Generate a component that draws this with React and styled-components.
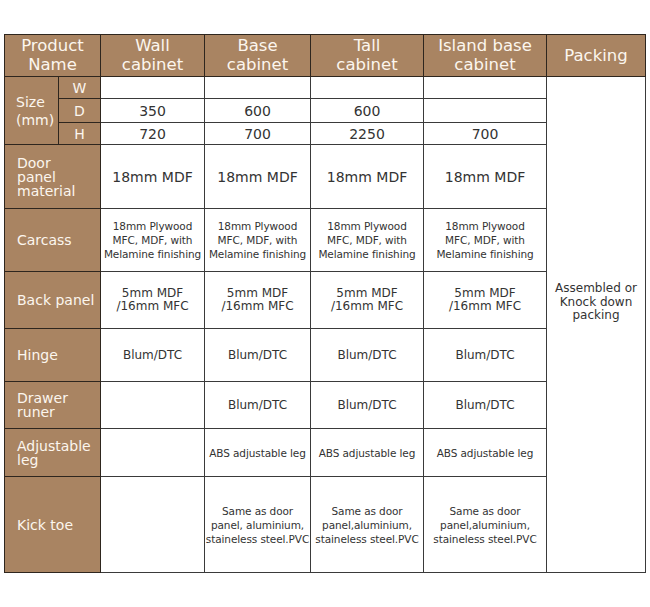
import React from "react";
import styled, { createGlobalStyle } from "styled-components";

const Global = createGlobalStyle`
  html, body { margin: 0; padding: 0; background: #fff; }
  body { font-family: "DejaVu Sans", Verdana, sans-serif; }
`;

const Page = styled.div`
  padding: 34px 5px 30px 4px;
`;

const Table = styled.table`
  border-collapse: collapse;
  table-layout: fixed;
  width: 641px;
  font-family: "DejaVu Sans", Verdana, sans-serif;
  color: #333;
  border: 1px solid #3a3a3a;
`;

const Row = styled.tr`
  height: ${(p) => p.h}px;
`;

const Head = styled.th`
  background: #a98462;
  color: #fcf6ee;
  font-weight: normal;
  font-size: 16.5px;
  line-height: 19px;
  text-align: center;
  vertical-align: middle;
  padding: 0 2px 1px;
  border: 1px solid #2e261e;
`;

const Label = styled.td`
  background: #a98462;
  color: #fcf6ee;
  font-size: 14px;
  line-height: ${(p) => p.lh || 14}px;
  text-align: ${(p) => (p.center ? "center" : "left")};
  vertical-align: middle;
  padding: 0 0 0 ${(p) => (p.center ? 0 : p.pl || 12)}px;
  border: 1px solid #2e261e;
`;

const Cell = styled.td`
  background: #fff;
  font-size: ${(p) => p.fs || 14}px;
  line-height: ${(p) => p.lh || 14}px;
  letter-spacing: ${(p) => (p.tight ? "-0.1px" : "0")};
  text-align: center;
  vertical-align: middle;
  padding: 0;
  white-space: nowrap;
  border: 1px solid #3a3a3a;
  border-left-color: ${(p) => (p.soft ? "#8c8c8c" : "#3a3a3a")};
`;

const Packing = styled(Cell)`
  padding-bottom: 44px;
  font-size: 12px;
  line-height: 13.4px;
`;

const widths = [54, 42, 104, 106, 113, 123, 99];

const Small = ({ lines, ...rest }) => (
  <Cell fs={10.5} lh={14} tight {...rest}>
    {lines.map((l, i) => (
      <React.Fragment key={i}>
        {i > 0 && <br />}
        {l}
      </React.Fragment>
    ))}
  </Cell>
);

export default function App() {
  return (
    <Page>
      <Global />
      <Table>
        <colgroup>
          {widths.map((w, i) => (
            <col key={i} style={{ width: w }} />
          ))}
        </colgroup>
        <tbody>
          <Row h={42}>
            <Head colSpan={2}>Product<br />Name</Head>
            <Head>Wall<br />cabinet</Head>
            <Head>Base<br />cabinet</Head>
            <Head>Tall<br />cabinet</Head>
            <Head>Island base<br />cabinet</Head>
            <Head>Packing</Head>
          </Row>
          <Row h={22}>
            <Label rowSpan={3} lh={18} pl={11}>Size<br />(mm)</Label>
            <Label center>W</Label>
            <Cell />
            <Cell soft />
            <Cell />
            <Cell />
            <Packing rowSpan={10}>Assembled or<br />Knock down<br />packing</Packing>
          </Row>
          <Row h={24}>
            <Label center>D</Label>
            <Cell>350</Cell>
            <Cell soft>600</Cell>
            <Cell>600</Cell>
            <Cell />
          </Row>
          <Row h={22}>
            <Label center>H</Label>
            <Cell>720</Cell>
            <Cell soft>700</Cell>
            <Cell>2250</Cell>
            <Cell>700</Cell>
          </Row>
          <Row h={64}>
            <Label colSpan={2}>Door<br />panel<br />material</Label>
            <Cell>18mm MDF</Cell>
            <Cell soft>18mm MDF</Cell>
            <Cell>18mm MDF</Cell>
            <Cell>18mm MDF</Cell>
          </Row>
          <Row h={63}>
            <Label colSpan={2}>Carcass</Label>
            <Small lines={["18mm Plywood", "MFC, MDF, with", "Melamine finishing"]} />
            <Small soft lines={["18mm Plywood", "MFC, MDF, with", "Melamine finishing"]} />
            <Small lines={["18mm Plywood", "MFC, MDF, with", "Melamine finishing"]} />
            <Small lines={["18mm Plywood", "MFC, MDF, with", "Melamine finishing"]} />
          </Row>
          <Row h={57}>
            <Label colSpan={2}>Back panel</Label>
            <Cell fs={12} lh={13.4}>5mm MDF<br />/16mm MFC</Cell>
            <Cell soft fs={12} lh={13.4}>5mm MDF<br />/16mm MFC</Cell>
            <Cell fs={12} lh={13.4}>5mm MDF<br />/16mm MFC</Cell>
            <Cell fs={12} lh={13.4}>5mm MDF<br />/16mm MFC</Cell>
          </Row>
          <Row h={53}>
            <Label colSpan={2}>Hinge</Label>
            <Cell fs={12}>Blum/DTC</Cell>
            <Cell soft fs={12}>Blum/DTC</Cell>
            <Cell fs={12}>Blum/DTC</Cell>
            <Cell fs={12}>Blum/DTC</Cell>
          </Row>
          <Row h={47}>
            <Label colSpan={2}>Drawer<br />runer</Label>
            <Cell />
            <Cell soft fs={12}>Blum/DTC</Cell>
            <Cell fs={12}>Blum/DTC</Cell>
            <Cell fs={12}>Blum/DTC</Cell>
          </Row>
          <Row h={48}>
            <Label colSpan={2}>Adjustable<br />leg</Label>
            <Cell />
            <Small soft lines={["ABS adjustable leg"]} />
            <Small lines={["ABS adjustable leg"]} />
            <Small lines={["ABS adjustable leg"]} />
          </Row>
          <Row h={96}>
            <Label colSpan={2}>Kick toe</Label>
            <Cell />
            <Small soft lines={["Same as door", "panel, aluminium,", "staineless steel.PVC"]} />
            <Small lines={["Same as door", "panel,aluminium,", "staineless steel.PVC"]} />
            <Small lines={["Same as door", "panel,aluminium,", "staineless steel.PVC"]} />
          </Row>
        </tbody>
      </Table>
    </Page>
  );
}
